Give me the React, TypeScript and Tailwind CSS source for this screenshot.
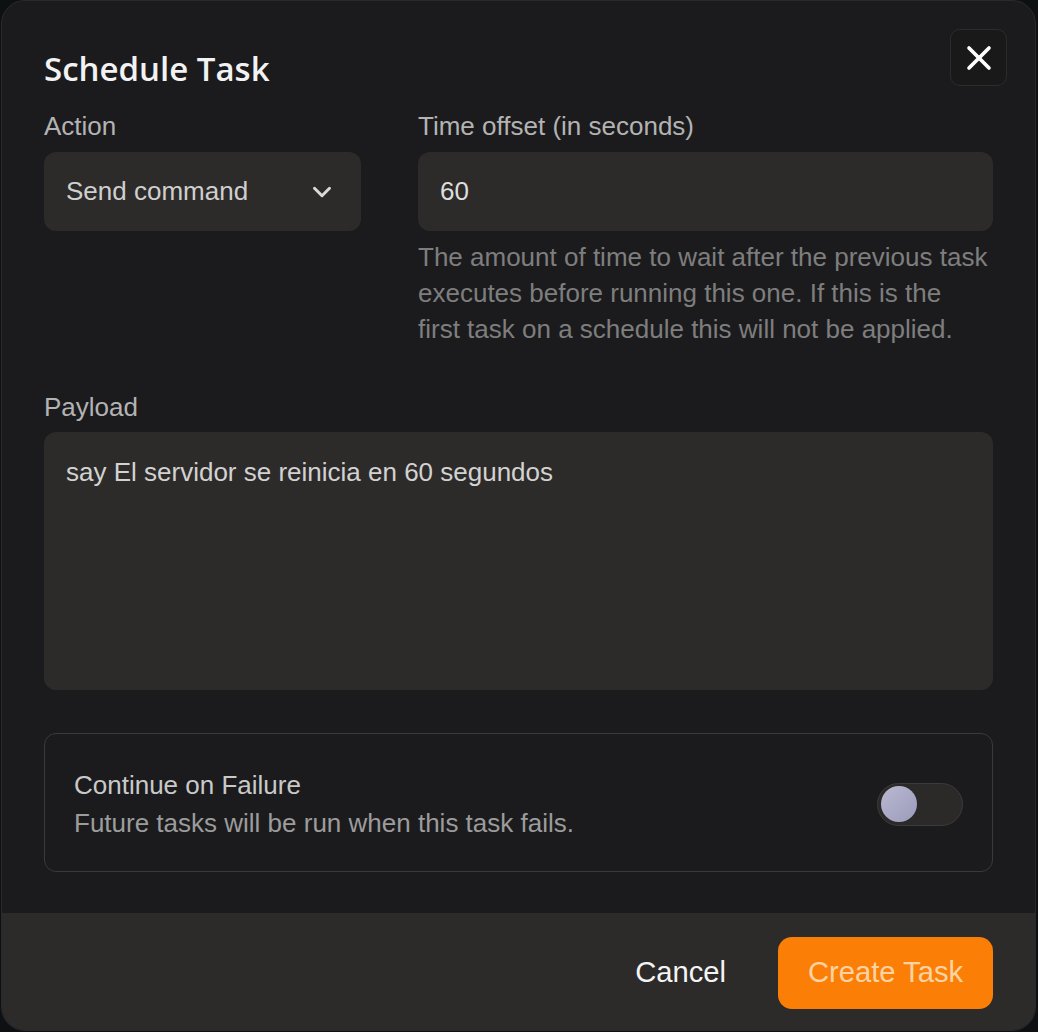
import { ChevronDown, X } from 'lucide-react';

const body = { fontFamily: '"Liberation Sans", Arial, sans-serif' };
const heading = { fontFamily: '"Open Sans", "Noto Sans", sans-serif' };

function Field({ label, children }: { label: string; children: React.ReactNode }) {
  return (
    <div className="flex flex-col">
      <label className="text-[26px] leading-[36px] text-[#b3b3b3]">{label}</label>
      <div className="mt-[8px]">{children}</div>
    </div>
  );
}

export default function App() {
  return (
    <div className="w-[1038px] h-[1032px] bg-[#0e1113] overflow-hidden" style={body}>
      <div className="ml-px w-[1035px] h-[1031px] rounded-[24px] border border-[#2a2a2c] bg-[#1b1b1d] flex flex-col overflow-hidden">
        <div className="flex-1 px-[42px] pt-[28px]">
          <div className="flex items-start justify-between">
            <h2
              className="mt-[17px] text-[33px] leading-[46px] font-semibold text-[#f2f2f2]"
              style={heading}
            >
              Schedule Task
            </h2>
            <button className="-mr-[14px] flex h-[57px] w-[57px] items-center justify-center rounded-[10px] border border-[#2c2c2e] bg-[#19191a] text-white">
              <X size={40} strokeWidth={2.2} />
            </button>
          </div>

          <div className="mt-[16px] grid grid-cols-[317px_1fr] gap-x-[57px]">
            <Field label="Action">
              <div className="flex h-[79px] items-center justify-between rounded-[12px] bg-[#2d2b29] pl-[22px] pr-[24px] text-[26px] text-[#cfcfcf]">
                <span>Send command</span>
                <ChevronDown size={30} strokeWidth={2.4} className="text-[#d8d8d8]" />
              </div>
            </Field>
            <Field label="Time offset (in seconds)">
              <div className="flex h-[79px] items-center rounded-[12px] bg-[#2d2b29] px-[22px] text-[26px] text-[#dedede]">
                60
              </div>
              <p className="mt-[8px] whitespace-nowrap text-[26px] leading-[36px] text-[#7e7e7e]">
                The amount of time to wait after the previous task
                <br />
                executes before running this one. If this is the
                <br />
                first task on a schedule this will not be applied.
              </p>
            </Field>
          </div>

          <div className="mt-[42px]">
            <label className="block text-[26px] leading-[36px] text-[#b3b3b3]">Payload</label>
            <div className="mt-[7px] h-[258px] rounded-[12px] bg-[#2d2b29] px-[22px] pt-[22px] text-[26px] leading-[36px] text-[#d2d2d2]">
              say El servidor se reinicia en 60 segundos
            </div>
          </div>

          <div className="mt-[43px] flex items-center justify-between rounded-[12px] border border-[#3a3a3c] pl-[29px] pr-[29px] pt-[32px] pb-[28px]">
            <div>
              <p className="text-[26px] leading-[38.4px] text-[#c9c9c9]">Continue on Failure</p>
              <p className="text-[26px] leading-[38.4px] text-[#9c9c9c]">
                Future tasks will be run when this task fails.
              </p>
            </div>
            <div className="flex h-[43px] w-[86px] items-center rounded-full border border-[#3b3b3b] bg-[#2c2a28] px-[3px]">
              <span className="h-[36px] w-[36px] rounded-full bg-gradient-to-br from-[#b9b9d2] to-[#9c9bbb]" />
            </div>
          </div>
        </div>

        <div className="flex h-[117px] items-center justify-end gap-[26px] bg-[#2d2b29] px-[42px] pt-[3px]">
          <button className="px-[26px] text-[29.2px] text-[#f4f4f4]">Cancel</button>
          <button className="h-[72px] w-[215px] rounded-[14px] bg-[#fb7f07] text-[29.2px] text-[#fdd3a4]">
            Create Task
          </button>
        </div>
      </div>
    </div>
  );
}
